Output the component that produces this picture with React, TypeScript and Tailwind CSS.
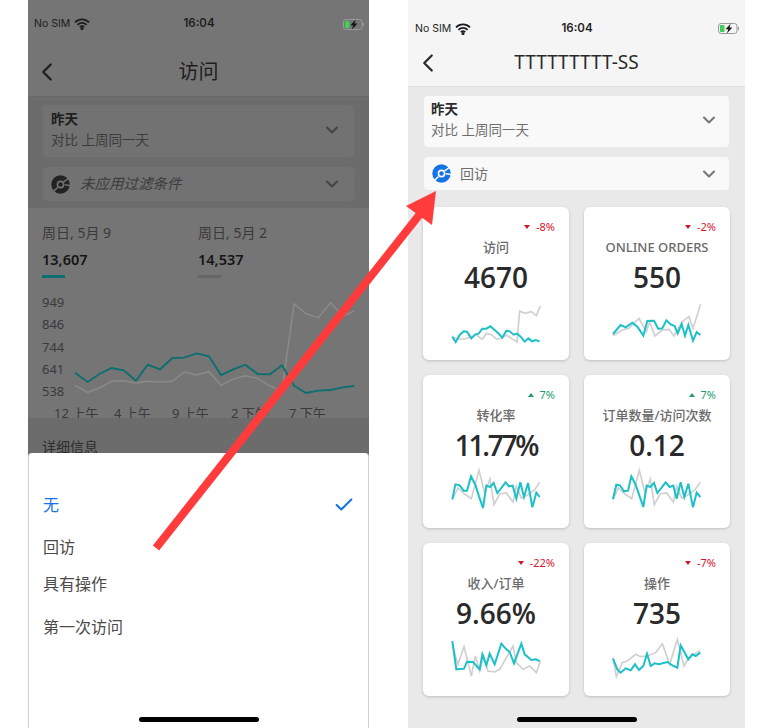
import React from 'react';
import { Check, ChevronDown, ChevronLeft } from 'lucide-react';

const font = "font-['Noto_Sans','Noto_Sans_CJK_SC',sans-serif]";

type Metric = {
  title: string;
  value: string;
  delta: string;
  up: boolean;
  ox: number;
  teal: number[];
  gray: number[];
};

const metrics: Metric[] = [
  {
    title: '访问', value: '4670', delta: '-8%', up: false, ox: 40,
    teal: [128,400,138,416,150,395,162,384,172,385,185,405,197,393,207,391,218,376,230,376,242,369,255,380,268,392,278,403,290,382,300,384,312,394,322,391,333,400,345,415,356,405,367,414,378,410,390,414],
    gray: [128,400,145,407,165,407,185,400,200,395,218,408,230,390,245,394,262,408,275,405,290,395,305,405,322,416,330,323,345,330,365,325,380,337,392,308],
  },
  {
    title: 'ONLINE ORDERS', value: '550', delta: '-2%', up: false, ox: 525,
    teal: [612,392,635,365,650,372,670,358,685,370,703,397,715,353,735,352,748,377,760,375,772,351,785,363,797,368,806,390,818,362,828,397,838,365,852,412,863,386,874,395],
    gray: [612,397,640,380,660,375,690,345,712,385,722,355,738,398,760,380,780,378,795,398,820,355,840,340,852,375,875,303],
  },
  {
    title: '转化率', value: '11.77%', delta: '7%', up: true, ox: 40,
    teal: [128,384,137,339,150,342,162,358,172,358,184,315,197,340,208,375,220,410,230,343,241,347,252,335,263,365,288,333,298,345,309,343,320,382,332,333,343,377,355,335,368,408,380,364,390,377],
    gray: [128,384,145,350,165,368,185,382,208,297,225,365,241,323,253,400,270,368,290,365,310,392,320,345,335,380,355,370,375,355,390,333],
  },
  {
    title: '订单数量/访问次数', value: '0.12', delta: '7%', up: true, ox: 525,
    teal: [612,384,622,340,633,342,645,360,657,358,667,315,680,340,692,375,703,407,713,343,724,347,735,335,745,365,770,333,782,347,793,343,803,382,815,333,826,377,838,337,852,408,863,364,874,377],
    gray: [612,384,628,350,648,368,668,382,691,297,708,365,724,323,736,400,753,368,773,365,793,392,803,345,818,380,838,370,858,355,874,333],
  },
  {
    title: '收入/订单', value: '9.66%', delta: '-22%', up: false, ox: 40,
    teal: [128,305,140,390,163,388,172,367,190,368,210,390,218,345,230,378,240,343,255,375,275,313,290,330,300,338,313,372,335,313,345,345,365,362,378,360,390,365],
    gray: [128,320,145,375,163,322,185,410,197,350,210,395,222,350,235,395,255,398,270,390,290,355,310,320,320,370,340,390,360,380,380,400,392,365],
  },
  {
    title: '操作', value: '735', delta: '-7%', up: false, ox: 525,
    teal: [612,358,625,390,635,400,650,387,665,393,678,375,690,392,703,380,714,343,725,380,737,372,750,375,775,368,790,378,805,385,815,318,838,360,850,345,860,350,874,340],
    gray: [612,355,622,412,640,370,655,365,680,345,695,352,715,350,740,340,760,313,782,375,805,300,825,380,840,355,874,333],
  },
];

const trendTeal = [165,452,203,480,238,456,275,438,311,445,348,476,383,428,420,442,457,408,493,407,530,394,567,403,603,459,640,442,676,428,713,456,750,457,786,430,822,491,858,513,895,506,932,504,968,496,1003,492];
const trendGray = [165,490,203,511,238,498,275,478,311,476,348,483,383,478,420,480,457,478,493,450,530,459,567,449,603,490,640,471,676,461,713,469,750,492,786,507,822,246,858,275,895,287,932,242,968,282,1003,267];

const toPoints = (raw: number[], ox: number, oy: number) => {
  const out: string[] = [];
  for (let i = 0; i < raw.length; i += 2) out.push(`${raw[i] - ox},${raw[i + 1] - oy}`);
  return out.join(' ');
};

function WifiIcon() {
  return (
    <svg width="16" height="12" viewBox="0 0 16 12" fill="none" stroke="currentColor" strokeWidth="1.8">
      <path d="M1 4.3a10 10 0 0 1 14 0" />
      <path d="M3.4 6.8a6.6 6.6 0 0 1 9.2 0" />
      <path d="M5.8 9.2a3.2 3.2 0 0 1 4.4 0" />
      <circle cx="8" cy="10.6" r="0.7" fill="currentColor" />
    </svg>
  );
}

function BatteryIcon() {
  return (
    <svg width="21" height="11" viewBox="0 0 21 11">
      <rect x="0.5" y="0.5" width="18.5" height="10" rx="2.5" fill="none" stroke="#9a9a9a" />
      <rect x="2" y="2" width="4.5" height="7" rx="0.8" fill="#3fd05a" />
      <path d="M12.8 0.5 L7.5 6.2 H10.3 L8.8 10.5 L14.4 4.6 H11.4 Z" fill="#111111" />
      <path d="M19.8 3.8 a1.6 1.6 0 0 1 0 3.4 Z" fill="#9a9a9a" />
    </svg>
  );
}

function StatusBar({ className }: { className: string }) {
  return (
    <div className={`grid grid-cols-[1fr_auto_1fr] items-center font-['Inter',sans-serif] text-[#1e1e1e] ${className}`}>
      <div className="flex items-center gap-[4px] text-[10.5px]">
        <span>No SIM</span>
        <WifiIcon />
      </div>
      <span className="text-[11.5px] font-semibold">16:04</span>
      <div className="justify-self-end">
        <BatteryIcon />
      </div>
    </div>
  );
}

function SegmentIcon({ color, gap }: { color: string; gap: string }) {
  return (
    <svg width="19" height="19" viewBox="0 0 19 19" fill="none">
      <circle cx="9.5" cy="9.5" r="9.2" fill={color} />
      <circle cx="9.5" cy="9.5" r="3.9" fill={gap} />
      <circle cx="9.5" cy="9.5" r="2.2" fill={color} />
      <g stroke={gap} strokeWidth="1.5">
        <path d="M6.5 12.6 L2.4 16.4" />
        <path d="M12.6 6.8 L17.2 3.6" />
        <path d="M13.6 9.8 L19 10.4" />
      </g>
    </svg>
  );
}

function LeftPhone() {
  return (
    <div className={`w-[341px] h-full flex flex-col shrink-0 bg-[#757575] ${font}`}>
      <StatusBar className="h-[48px] pl-[6px] pr-[5px]" />
      <div className="h-[49px] flex items-center relative border-b border-[#686868]">
        <ChevronLeft className="ml-[4px] text-[#1e1e1e]" size={30} strokeWidth={1.8} />
        <span className="absolute inset-x-0 text-center text-[20px] text-[#1e1e1e]">访问</span>
      </div>

      <div className="h-[111px] bg-[#6c6c6c] px-[15px] pt-[8px] flex flex-col gap-[10px]">
        <div className="h-[52px] pb-[2px] bg-[#727272] rounded-[4px] flex items-center justify-between pl-[8px] pr-[12px]">
          <div className="leading-[21px] text-[13.5px]">
            <div className="font-semibold text-[#1e1e1e]">昨天</div>
            <div className="text-[#3c3c3c]">对比 上周同一天</div>
          </div>
          <ChevronDown className="text-[#444]" size={20} strokeWidth={2.5} />
        </div>
        <div className="h-[34px] bg-[#727272] rounded-[4px] flex items-center justify-between pl-[8px] pr-[12px]">
          <div className="flex items-center gap-[10px]">
            <SegmentIcon color="#222222" gap="#727272" />
            <span className="italic text-[14.5px] text-[#3c3c3c]">未应用过滤条件</span>
          </div>
          <ChevronDown className="text-[#444]" size={20} strokeWidth={2.5} />
        </div>
      </div>

      <div className="h-[210px] overflow-hidden px-[14px] pt-[14px]">
        <div className="flex text-[#3a3a3a] text-[14px]">
          <div className="w-[156px]">
            <div className="leading-[22px]">周日, 5月 9</div>
            <div className="mt-[4px] leading-[22px] text-[#161616] font-semibold text-[14.5px]">13,607</div>
            <div className="mt-[5px] w-[23px] h-[3px] bg-[#0b6e70]" />
          </div>
          <div>
            <div className="leading-[22px]">周日, 5月 2</div>
            <div className="mt-[4px] leading-[22px] text-[#161616] font-semibold text-[14.5px]">14,537</div>
            <div className="mt-[5px] w-[23px] h-[3px] bg-[#666]" />
          </div>
        </div>
        <div className="flex mt-[13px] h-[102px]">
          <div className="w-[22px] text-[13px] text-[#3a3a3a] text-right leading-[22.3px]">
            <div>949</div>
            <div>846</div>
            <div>744</div>
            <div>641</div>
            <div>538</div>
          </div>
          <svg width="285" height="102" viewBox="150 225 855 306" fill="none" className="ml-[6px] mt-[6px] overflow-visible">
            <polyline points={toPoints(trendGray, 0, 0)} stroke="#8a8a8a" strokeWidth="4.5" />
            <polyline points={toPoints(trendTeal, 0, 0)} stroke="#0b6e70" strokeWidth="5.5" />
          </svg>
        </div>
        <div className="flex mt-[11px] ml-[12px] text-[13px] text-[#3a3a3a] leading-[18px] whitespace-nowrap">
          <span className="w-[60px]">12 上午</span>
          <span className="w-[58px]">4 上午</span>
          <span className="w-[59px]">9 上午</span>
          <span className="w-[58px]">2 下午</span>
          <span>7 下午</span>
        </div>
      </div>

      <div className="h-[35px] bg-[#6c6c6c] overflow-hidden px-[14px] pt-[18px] text-[14px] leading-[22px] text-[#2c2c2c]">
        详细信息
      </div>

      <div className="h-[275px] bg-white rounded-t-[4px] border-x border-[#cfcfcf] px-[14px] pt-[40px] flex flex-col text-[16px] leading-[24px] text-[#4b4b4b]">
        <div className="flex items-center justify-between text-[#1473e6]">
          <span>无</span>
          <Check size={22} strokeWidth={2.2} className="-mr-[1px]" />
        </div>
        <div className="mt-[18px]">回访</div>
        <div className="mt-[13px]">具有操作</div>
        <div className="mt-[19px]">第一次访问</div>
        <div className="mt-auto mb-[6px] mx-auto w-[120px] h-[5px] rounded-full bg-black" />
      </div>
    </div>
  );
}

function MetricCard({ m }: { m: Metric }) {
  return (
    <div className="h-[153px] bg-white rounded-[6px] shadow-[0_1px_3px_rgba(0,0,0,0.18)] pt-[12px] flex flex-col items-center">
      <div className={`w-full h-[16px] pr-[14px] flex items-center justify-end gap-[6px] text-[11px] ${m.up ? 'text-[#1f9d6c]' : 'text-[#d5152e]'}`}>
        <span className={`w-0 h-0 border-x-[3.5px] border-x-transparent ${m.up ? 'border-b-[4px] border-b-[#1f9d6c]' : 'border-t-[4px] border-t-[#d5152e]'}`} />
        <span>{m.delta}</span>
      </div>
      <div className="mt-[1px] h-[22px] leading-[22px] text-[13px] font-medium text-[#6a6a6a] whitespace-nowrap">{m.title}</div>
      <div className={`h-[38px] leading-[38px] text-[28px] font-semibold text-[#2a2a2a] font-['Open_Sans',sans-serif] ${m.value === '11.77%' ? 'tracking-[-2.2px]' : ''}`}>{m.value}</div>
      <svg width="146" height="45" viewBox="0 0 438 135" fill="none" className="mt-[4px] overflow-visible">
        <polyline points={toPoints(m.gray, m.ox, 290)} stroke="#d0d0d0" strokeWidth="5" />
        <polyline points={toPoints(m.teal, m.ox, 290)} stroke="#1cc0c8" strokeWidth="6" />
      </svg>
    </div>
  );
}

function RightPhone() {
  return (
    <div className={`ml-[39px] w-[337px] h-full flex flex-col shrink-0 bg-[#e9e9e9] ${font}`}>
      <div className="h-[87px] bg-[#f5f5f5] border-b border-[#e2e2e2] flex flex-col">
        <StatusBar className="h-[56px] pt-[1px] pl-[7px] pr-[6px]" />
        <div className="h-[31px] -mt-[9px] flex items-center relative text-[#2a2a2a]">
          <ChevronLeft className="ml-[5px]" size={30} strokeWidth={1.8} />
          <span className="absolute inset-x-0 text-center text-[19px]">TTTTTTTTT-SS</span>
        </div>
      </div>

      <div className="px-[16px] pt-[9px] flex flex-col">
        <div className="h-[51px] pb-[4px] pl-[7px] pr-[10px] bg-[#f9f9f9] rounded-[4px] flex items-center justify-between">
          <div className="leading-[21px] text-[13.5px]">
            <div className="font-semibold text-[#2c2c2c]">昨天</div>
            <div className="text-[#6e6e6e]">对比 上周同一天</div>
          </div>
          <ChevronDown className="text-[#777]" size={20} strokeWidth={2.5} />
        </div>
        <div className="mt-[10px] h-[33px] bg-[#f9f9f9] rounded-[4px] flex items-center justify-between pl-[8px] pr-[10px]">
          <div className="flex items-center gap-[9px]">
            <SegmentIcon color="#1473e6" gap="#f9f9f9" />
            <span className="text-[14px] text-[#6e6e6e]">回访</span>
          </div>
          <ChevronDown className="text-[#777]" size={20} strokeWidth={2.5} />
        </div>
      </div>

      <div className="mt-[17px] ml-[15px] w-[307px] grid grid-cols-[146px_146px] gap-x-[15px] gap-y-[15px]">
        {metrics.map((m) => (
          <MetricCard key={m.title} m={m} />
        ))}
      </div>

      <div className="mt-auto mb-[6px] mx-auto w-[120px] h-[5px] rounded-full bg-black" />
    </div>
  );
}

export default function App() {
  return (
    <div className="relative w-[782px] h-[728px] overflow-hidden bg-white flex pl-[28px]">
      <LeftPhone />
      <RightPhone />
      {/* annotation arrow between the two screens */}
      <svg width="782" height="728" className="absolute inset-0 pointer-events-none">
        <line x1="156" y1="548" x2="420" y2="214" stroke="#ff3b3b" strokeWidth="8" />
        <polygon points="436,191 406,206 432,225" fill="#ff3b3b" />
      </svg>
    </div>
  );
}
